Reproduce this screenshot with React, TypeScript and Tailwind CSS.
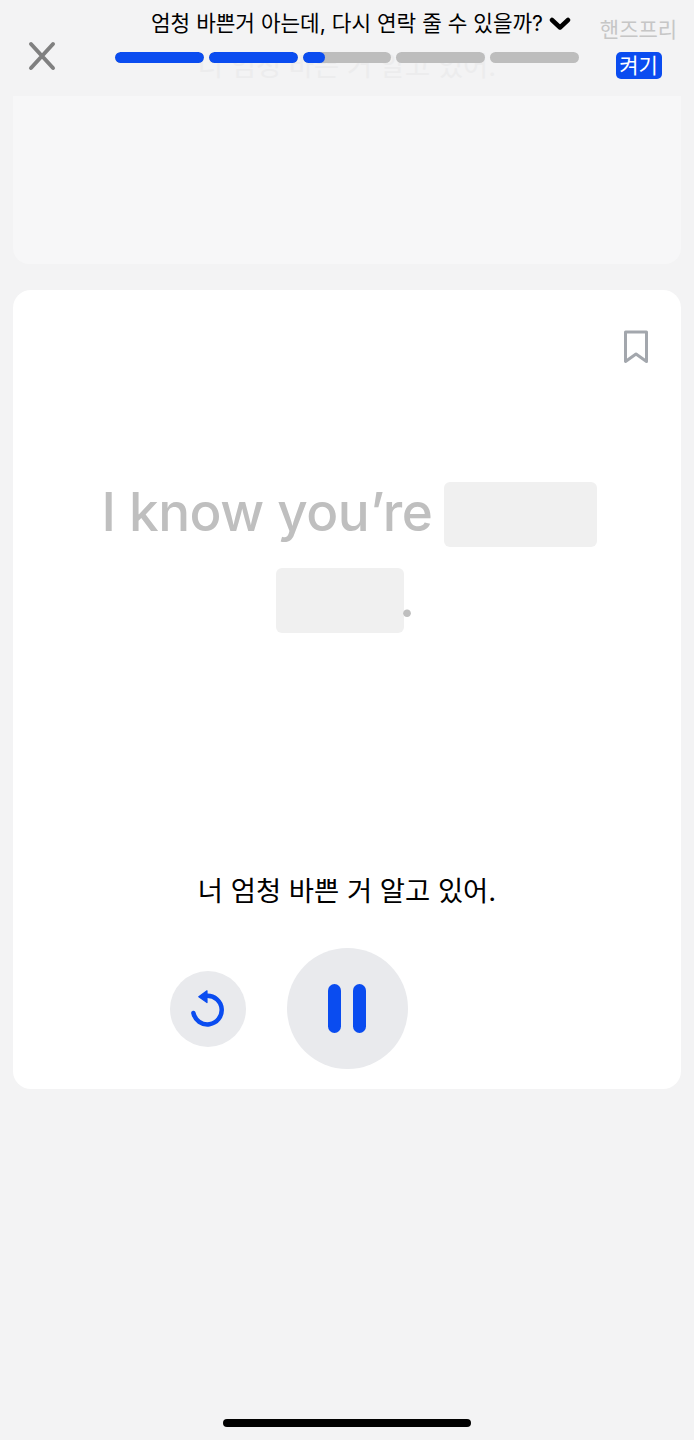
const fontStack = "font-['Inter','Noto_Sans_CJK_KR',sans-serif]";
const progress = [100, 100, 25, 0, 0];

export default function App() {
  return (
    <div className={`w-[694px] h-[1440px] bg-[#f3f3f4] flex flex-col overflow-hidden ${fontStack}`}>
      {/* Header */}
      <header className="relative h-[96px] shrink-0 flex">
        {/* Sentence scrolling away behind the header */}
        <div className="absolute left-0 right-0 top-[46px] text-center text-[27.4px] leading-[40px] text-[#ececed] whitespace-nowrap">
          너 엄청 바쁜 거 알고 있어.
        </div>
        <div className="relative w-[115px] shrink-0 flex items-start pt-[36px] pl-[23px]">
          <svg width="38" height="40" viewBox="0 0 38 40" fill="none">
            <path d="M8 8 L30 32 M30 8 L8 32" stroke="#808080" strokeWidth="4" strokeLinecap="round" />
          </svg>
        </div>
        <div className="relative w-[464px] shrink-0 flex flex-col items-center pt-[8px]">
          <div className="flex items-center gap-[6px] h-[32px] pl-[28px] whitespace-nowrap text-[21.3px] text-black">
            <span>엄청 바쁜거 아는데, 다시 연락 줄 수 있을까?</span>
            <svg width="22" height="14" viewBox="0 0 22 14" fill="none">
              <path d="M3 3 L11 10.5 L19 3" stroke="#000000" strokeWidth="4.5" strokeLinecap="round" strokeLinejoin="round" />
            </svg>
          </div>
          <div className="mt-[12px] w-full flex gap-[5px]">
            {progress.map((p, i) => (
              <div key={i} className="flex-1 h-[11px] rounded-full bg-[#bdbdbd] overflow-hidden">
                <div className="h-full rounded-full bg-[#0a4cf0]" style={{ width: `${p}%` }} />
              </div>
            ))}
          </div>
        </div>
        <div className="relative flex-1 flex flex-col items-center pt-[16px] pl-[4px]">
          <span className="text-[21px] leading-[28px] text-[#c6c6c6] whitespace-nowrap">핸즈프리</span>
          <span className="mt-[8px] w-[46px] h-[27px] rounded-[5px] bg-[#0a4cf0] text-white text-[21px] leading-[27px] text-center">켜기</span>
        </div>
      </header>

      {/* Previous card, scrolled mostly out of view */}
      <div className="mx-[13px] h-[168px] shrink-0 rounded-b-[16px] bg-[#f7f7f8]" />

      {/* Current card */}
      <section className="relative mx-[13px] mt-[26px] h-[799px] shrink-0 rounded-[18px] bg-white flex flex-col items-center">
        <svg width="26" height="34" viewBox="0 0 26 34" fill="none" className="absolute right-[32px] top-[40px]">
          <path d="M2.5 2 H23.5 V31.5 L13 24 L2.5 31.5 Z" stroke="#a3a7ad" strokeWidth="3" strokeLinejoin="round" />
        </svg>
        <div className="mt-[192px] ml-[4px] flex items-center gap-[11px] h-[65px]">
          <span className="mb-[6px] text-[53px] leading-[60px] font-medium tracking-[-0.5px] text-[#bfbfbf] whitespace-nowrap">I know you’re</span>
          <span className="w-[153px] h-[65px] rounded-[6px] bg-[#f0f0f0]" />
        </div>
        <div className="mt-[21px] flex items-end h-[65px] pr-[3px]">
          <span className="w-[128px] h-[65px] rounded-[6px] bg-[#f0f0f0]" />
          <span className="ml-[-5px] mb-[16px] text-[53px] leading-[38px] font-medium text-[#bfbfbf]">.</span>
        </div>
        <p className="mt-[238px] text-[27.4px] leading-[40px] text-black whitespace-nowrap">너 엄청 바쁜 거 알고 있어.</p>
        <div className="mt-[37px] flex items-center gap-[41px] w-full pl-[157px]">
          <button className="w-[76px] h-[76px] rounded-full bg-[#e9eaed] flex items-center justify-center">
            <svg width="38" height="38" viewBox="0 0 38 38" fill="none">
              <path d="M18 5.8 A14.3 14.3 0 1 1 4.4 23" stroke="#0a4cf0" strokeWidth="4.5" strokeLinecap="round" fill="none" />
              <path d="M9.8 6.7 L18 0.8 V12.6 Z" fill="#0a4cf0" stroke="#0a4cf0" strokeWidth="1.2" strokeLinejoin="round" />
            </svg>
          </button>
          <button className="w-[121px] h-[121px] rounded-full bg-[#e9eaed] flex items-center justify-center gap-[12px] pr-[1px]">
            <span className="w-[13px] h-[49px] rounded-full bg-[#0a4cf0]" />
            <span className="w-[13px] h-[49px] rounded-full bg-[#0a4cf0]" />
          </button>
        </div>
      </section>

      {/* Home indicator */}
      <div className="mt-[330px] mx-auto w-[248px] h-[8px] rounded-full bg-black shrink-0" />
    </div>
  );
}
